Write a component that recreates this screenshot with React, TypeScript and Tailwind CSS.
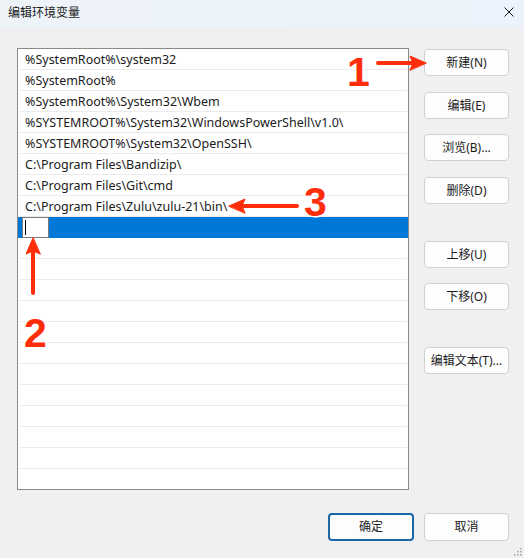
import React from "react";

const paths = [
  "%SystemRoot%\\system32",
  "%SystemRoot%",
  "%SystemRoot%\\System32\\Wbem",
  "%SYSTEMROOT%\\System32\\WindowsPowerShell\\v1.0\\",
  "%SYSTEMROOT%\\System32\\OpenSSH\\",
  "C:\\Program Files\\Bandizip\\",
  "C:\\Program Files\\Git\\cmd",
  "C:\\Program Files\\Zulu\\zulu-21\\bin\\",
];

const FONT = "font-['Segoe_UI','Noto_Sans','Noto_Sans_CJK_SC',sans-serif]";

function SideButton({ label, className = "" }: { label: string; className?: string }) {
  return (
    <button
      className={`w-[85px] h-[27px] rounded-[4px] border border-[#d1d1d1] bg-[#fdfdfd] text-[12px] text-[#1b1b1b] flex items-center justify-center ${className}`}
    >
      {label}
    </button>
  );
}

function Num({ n, className }: { n: string; className: string }) {
  return (
    <span
      className={`absolute font-['Liberation_Sans',sans-serif] font-bold text-[41px] leading-none text-[#ff2d0a] [-webkit-text-stroke:3px_white] [paint-order:stroke_fill] ${className}`}
    >
      {n}
    </span>
  );
}

export default function App() {
  const emptyRows = Array.from({ length: 12 });

  return (
    <div className={`relative w-[524px] h-[558px] bg-[#f0eff2] flex flex-col overflow-hidden ${FONT}`}>
      {/* title bar */}
      <div className="h-[27px] bg-gradient-to-r from-[#eef3f8] to-[#eaf3fb] flex items-center justify-between pl-[8px] pr-[10px]">
        <span className="text-[12px] text-[#1a1a1a] -mt-[2px]">编辑环境变量</span>
        <svg width="10" height="10" viewBox="0 0 10 10" className="-mt-[3px]">
          <path d="M0.5 0.5 L9.5 9.5 M9.5 0.5 L0.5 9.5" stroke="#1a1a1a" strokeWidth="1" />
        </svg>
      </div>

      <div className="flex pl-[17px] pt-[21px]">
        {/* list */}
        <div className="w-[392px] h-[442px] border border-[#8a8a8a] bg-white overflow-hidden">
          {paths.map((p) => (
            <div key={p} className="h-[21px] mx-[1px] border-b border-[#ececec] flex items-center pl-[6px] pt-[2px] text-[12.5px] text-[#1b1b1b] whitespace-nowrap">
              {p}
            </div>
          ))}
          <div className="h-[21px] bg-[#0078d7] flex items-center pl-[4px]">
            <div className="w-[27px] h-[21px] bg-white border border-[#7a7a7a] flex items-center pl-[2px]">
              <div className="w-[1px] h-[15px] bg-black" />
            </div>
          </div>
          {emptyRows.map((_, i) => (
            <div key={i} className="h-[21px] mx-[1px] border-b border-[#ececec]" />
          ))}
        </div>

        {/* buttons */}
        <div className="ml-[15px] pt-[1px] flex flex-col">
          <SideButton label="新建(N)" />
          <SideButton label="编辑(E)" className="mt-[16px]" />
          <SideButton label="浏览(B)..." className="mt-[15px]" />
          <SideButton label="删除(D)" className="mt-[16px]" />
          <SideButton label="上移(U)" className="mt-[37px]" />
          <SideButton label="下移(O)" className="mt-[15px]" />
          <SideButton label="编辑文本(T)..." className="mt-[37px]" />
        </div>
      </div>

      {/* bottom buttons */}
      <div className="flex justify-end gap-[10px] pr-[15px] mt-[23px]">
        <button className="w-[86px] h-[28px] rounded-[4px] border-2 border-[#1c67a8] bg-[#fdfdfd] text-[12px] text-[#1b1b1b]">
          确定
        </button>
        <button className="w-[85px] h-[28px] rounded-[4px] border border-[#d1d1d1] bg-[#fdfdfd] text-[12px] text-[#1b1b1b]">
          取消
        </button>
      </div>

      {/* resize grip */}
      <svg width="10" height="10" viewBox="0 0 10 10" className="absolute right-[2px] bottom-[2px]">
        {[
          [8, 2],
          [8, 5],
          [5, 5],
          [8, 8],
          [5, 8],
          [2, 8],
        ].map(([x, y], i) => (
          <rect key={i} x={x} y={y} width="1.5" height="1.5" fill="#a0a0a0" />
        ))}
      </svg>

      {/* annotations */}
      <svg className="absolute left-0 top-0 pointer-events-none" width="524" height="558">
        <g fill="#ff2d0a" stroke="#ff2d0a" strokeLinecap="round">
          <line x1="378" y1="63" x2="414" y2="63" strokeWidth="4" />
          <polygon points="426,63 410,56 413,63 410,70" strokeWidth="1" />
          <line x1="297" y1="206" x2="242" y2="206" strokeWidth="4" />
          <polygon points="229,206 245,199 242,206 245,213" strokeWidth="1" />
          <line x1="33" y1="293" x2="33" y2="251" strokeWidth="4" />
          <polygon points="33,238 26,254 33,251 40,254" strokeWidth="1" />
        </g>
      </svg>
      <Num n="1" className="left-[347px] top-[52px]" />
      <Num n="3" className="left-[304px] top-[182px]" />
      <Num n="2" className="left-[24px] top-[313px]" />
    </div>
  );
}
